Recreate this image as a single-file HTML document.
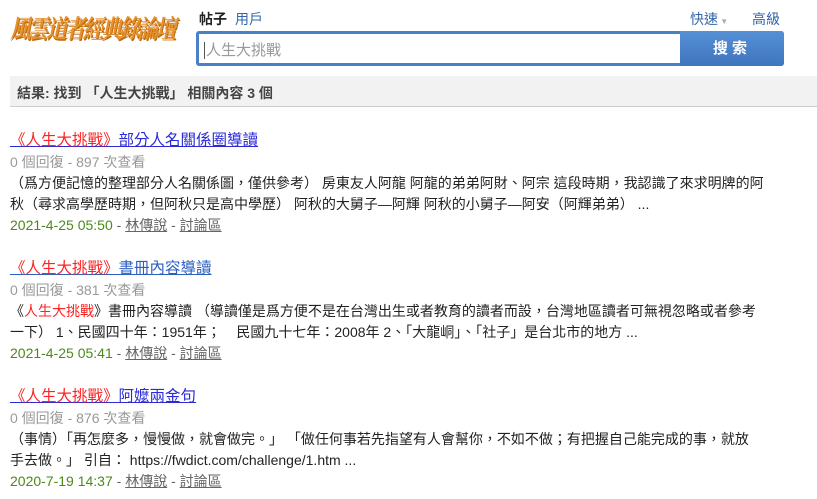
<!DOCTYPE html>
<html><head><meta charset="utf-8"><style>
*{margin:0;padding:0;box-sizing:border-box}
body{width:817px;height:499px;background:#fff;font-family:"Liberation Sans","Noto Sans CJK TC",sans-serif;position:relative;overflow:hidden;color:#333}
.logo{position:absolute;left:12px;top:13px;font-size:21px;font-weight:bold;color:#e8902a;letter-spacing:-2.8px;transform:skewX(-12deg) scaleY(1.2);text-shadow:1px 1px 0 #b86a10;white-space:nowrap;font-family:"Noto Serif CJK SC",serif}
.tab{position:absolute;top:9px;font-size:14px}
.box{position:absolute;left:196px;top:31px;width:588px;height:35px;background:#4a80c8;border-radius:3px}
.inp{position:absolute;left:3px;top:3px;width:481px;height:29px;background:#fff;font-size:15px;color:#999;padding:5px 0 0 5px}
.inp span{border-left:1px solid #555;padding-left:1px}
.btn{position:absolute;left:484px;top:0;width:104px;height:35px;color:#fff;font-weight:bold;font-size:15px;text-align:center;line-height:35px;letter-spacing:4px;background:linear-gradient(#5590d5,#3f75bd);border-radius:0 3px 3px 0}
.bar{position:absolute;left:10px;top:76px;width:807px;height:31px;background:#f2f2f2;border-bottom:1px solid #ccc;font-size:14px;font-weight:bold;color:#444;padding:7px 0 0 7px}
.item{position:absolute;left:10px;font-size:14px;line-height:21px;white-space:nowrap}
.t{font-size:15.5px;line-height:22px;text-decoration:underline;color:#2a2ad8}
.t .r{color:#f22}
.m{color:#999}
.d{color:#222}
.d .r{color:#f22}
.f{color:#4a8a1a}
.f u{color:#666}
.f s{color:#666;text-decoration:none}
</style></head><body>
<div class="logo">風雲道者經典錄論壇</div>
<div class="tab" style="left:199px;font-weight:bold;color:#222">帖子</div>
<div class="tab" style="left:235px;color:#3366aa">用戶</div>
<div class="tab" style="left:690px;color:#3366aa">快速<span style="color:#aaa;font-size:8px"> ▼</span></div>
<div class="tab" style="left:752px;color:#3366aa">高級</div>
<div class="box"><div class="inp"><span>人生大挑戰</span></div><div class="btn">搜索</div></div>
<div class="bar">結果: 找到 「人生大挑戰」 相關內容 3 個</div>

<div class="item" style="top:130px">
<div class="t"><span class="r">《人生大挑戰》</span>部分人名關係圈導讀</div>
<div class="m">0 個回復 - 897 次查看</div>
<div class="d">（爲方便記憶的整理部分人名關係圖，僅供參考） 房東友人阿龍 阿龍的弟弟阿財、阿宗 這段時期，我認識了來求明牌的阿<br>秋（尋求高學歷時期，但阿秋只是高中學歷） 阿秋的大舅子—阿輝 阿秋的小舅子—阿安（阿輝弟弟） ...</div>
<div class="f">2021-4-25 05:50 <s>-</s> <u>林傳說</u> <s>-</s> <u>討論區</u></div>
</div>

<div class="item" style="top:258px">
<div class="t" style="color:#2b5fc0"><span class="r">《人生大挑戰》</span>書冊內容導讀</div>
<div class="m">0 個回復 - 381 次查看</div>
<div class="d">《<span class="r">人生大挑戰</span>》書冊內容導讀 （導讀僅是爲方便不是在台灣出生或者教育的讀者而設，台灣地區讀者可無視忽略或者參考<br>一下） 1、民國四十年：1951年；&nbsp;&nbsp;&nbsp; 民國九十七年：2008年 2、「大龍峒」、「社子」是台北市的地方 ...</div>
<div class="f">2021-4-25 05:41 <s>-</s> <u>林傳說</u> <s>-</s> <u>討論區</u></div>
</div>

<div class="item" style="top:386px">
<div class="t"><span class="r">《人生大挑戰》</span>阿嬤兩金句</div>
<div class="m">0 個回復 - 876 次查看</div>
<div class="d">（事情）「再怎麼多，慢慢做，就會做完。」 「做任何事若先指望有人會幫你，不如不做；有把握自己能完成的事，就放<br>手去做。」 引自： https://fwdict.com/challenge/1.htm ...</div>
<div class="f">2020-7-19 14:37 <s>-</s> <u>林傳說</u> <s>-</s> <u>討論區</u></div>
</div>
</body></html>
